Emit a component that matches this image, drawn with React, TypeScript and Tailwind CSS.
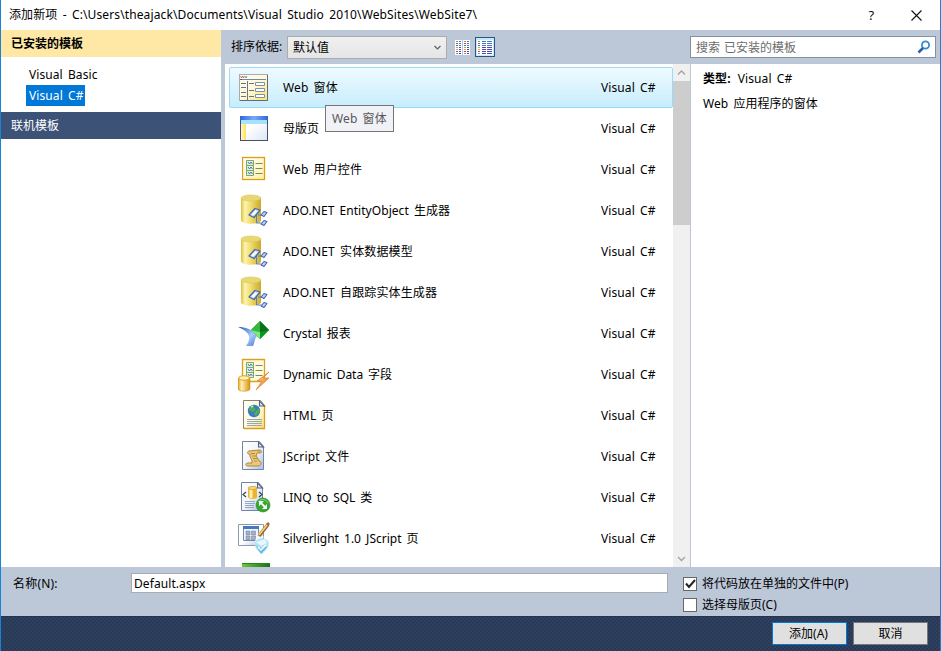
import React from "react";

const FONT = "font-['Noto_Sans','Noto_Sans_CJK_SC',sans-serif]";

function WebFormIcon() {
  return (
    <svg width="32" height="32" viewBox="0 0 32 32">
      <defs>
        <linearGradient id="wf" x1="0" y1="0" x2="1" y2="1">
          <stop offset="0" stopColor="#fffef0" />
          <stop offset="0.5" stopColor="#fff9d8" />
          <stop offset="1" stopColor="#fbe36c" />
        </linearGradient>
      </defs>
      <rect x="1.5" y="2.500" width="28" height="26" fill="url(#wf)" stroke="#a9abb0" />
      <path d="M29.500 3v25.500H2" fill="none" stroke="#606a80" />
      <path d="M2.500 4l1 2 1-2 1 2 1-2M7 4l1 2 1-2" fill="none" stroke="#4c5770" strokeWidth=".6" />
      <path d="M3 7.500h25" stroke="#7087aa" />
      <path d="M2 7.500h2" stroke="#e32914" />
      <path d="M9.500 9v19" stroke="#68748b" />
      <path d="M3 11.500h5M3 15.500h5M3 20.500h5M3 24.500h5M11 11.500h5M11 18.500h5M11 24.500h5" stroke="#68748b" />
      <path d="M17.500 10.500h9v3h-9zM17.500 16.500h9v3h-9zM17.500 22.500h9v3h-9z" fill="#fff" stroke="#7c92ac" />
    </svg>
  );
}

function MasterPageIcon() {
  return (
    <svg width="32" height="32" viewBox="0 0 32 32">
      <defs>
        <linearGradient id="mp" x1="0" y1="0" x2="1" y2="0">
          <stop offset="0" stopColor="#2869df" />
          <stop offset="0.5" stopColor="#7da8f6" />
          <stop offset="1" stopColor="#2d67d8" />
        </linearGradient>
        <linearGradient id="mpw" x1="0" y1="0" x2="1" y2="1">
          <stop offset="0.4" stopColor="#fff" />
          <stop offset="1" stopColor="#dce5f6" />
        </linearGradient>
        <linearGradient id="mpy" x1="0" y1="0" x2="1" y2="0">
          <stop offset="0" stopColor="#fff8cf" />
          <stop offset="1" stopColor="#ffe152" />
        </linearGradient>
      </defs>
      <rect x="2.500" y="3.500" width="27" height="24" fill="url(#mpw)" stroke="#44516e" />
      <path d="M2 3h28v4H2z" fill="url(#mp)" />
      <path d="M3 7h26v4H3z" fill="#a5e2fc" />
      <path d="M3 11h5v16H3z" fill="url(#mpy)" />
    </svg>
  );
}

function FormRows() {
  return (
    <>
      <path d="M6.500 6.500h7v5h-7zM6.500 11.500h7v5h-7zM6.500 16.500h7v5h-7z" fill="#e3efdc" stroke="#77ab6b" />
      <path d="M8 8l1.500 2L11 8l1.500 2M8 13l1.500 2 1.500-2 1.500 2M8 18l1.500 2 1.500-2 1.500 2" fill="none" stroke="#4769a4" strokeWidth=".9" />
      <path d="M15.500 9.500h7M15.500 14.500h7M15.500 19.500h7" stroke="#798a68" />
    </>
  );
}

function UserControlIcon() {
  return (
    <svg width="32" height="32" viewBox="0 0 32 32">
      <defs>
        <linearGradient id="uc" x1="0" y1="0" x2="1" y2="1">
          <stop offset="0" stopColor="#fff" />
          <stop offset="1" stopColor="#fff2a8" />
        </linearGradient>
      </defs>
      <rect x=".500" y="3.500" width="22" height="22" fill="url(#uc)" stroke="#dd9e16" strokeWidth="1.300" />
      <g transform="translate(-2 0)"><FormRows /></g>
    </svg>
  );
}

function DatabaseIcon() {
  return (
    <svg width="32" height="34" viewBox="0 0 32 34">
      <defs>
        <linearGradient id="db" x1="0" y1="0" x2="1" y2="0">
          <stop offset="0" stopColor="#dcc23c" />
          <stop offset="0.2" stopColor="#fdf4ae" />
          <stop offset="0.5" stopColor="#efdc6c" />
          <stop offset="1" stopColor="#c9a92f" />
        </linearGradient>
      </defs>
      <path d="M3 4v22c0 5 20 5 20 0V4z" fill="url(#db)" />
      <ellipse cx="13" cy="4" rx="10" ry="3" fill="#e8d873" stroke="#dcc65a" strokeWidth=".6" />
      <path d="M18.500 21v8h5M20 21h6" fill="none" stroke="#5c7fc0" />
      <path d="M11 21l6-6.500 5 1.500-6 7.500z" fill="#c9dcfa" stroke="#4867aa" strokeWidth="1.300" strokeLinejoin="round" />
      <path d="M13.500 20.500l4-4 2 .7-4 4z" fill="#fff" />
      <g fill="#b9d1fa" stroke="#4867aa" strokeWidth="1.100" strokeLinejoin="round">
        <path d="M23 21l3-3.500 3 1-3 4zM23 30l3-3.500 3 1-3 4z" />
      </g>
    </svg>
  );
}

function CrystalIcon() {
  return (
    <svg width="34" height="32" viewBox="0 0 34 32">
      <defs>
        <linearGradient id="cr" x1="0" y1="0" x2="1" y2="1">
          <stop offset="0" stopColor="#245ba9" />
          <stop offset="0.55" stopColor="#a8ccff" />
          <stop offset="1" stopColor="#4378ce" />
        </linearGradient>
      </defs>
      <path d="M0 9c8 0 13 2 17 7l3 1c-4 3-3 8-5 11H8c6-8 4-14-8-19z" fill="url(#cr)" />
      <path d="M22 3l9 9-9 9-9-9z" fill="#0b8b1c" />
      <path d="M22 3l-9 9 9 2z" fill="#34b73c" />
      <path d="M13 12l9 2v7z" fill="#7fe57f" />
      <path d="M22 14l9-2-9 9z" fill="#07991a" />
      <path d="M22 3l9 9-9 2z" fill="#08711a" />
    </svg>
  );
}

function DynamicDataIcon() {
  return (
    <svg width="34" height="34" viewBox="0 0 34 34">
      <defs>
        <linearGradient id="dd" x1="0" y1="0" x2="1" y2="0">
          <stop offset="0" stopColor="#e6a01b" />
          <stop offset="0.3" stopColor="#fff1b0" />
          <stop offset="1" stopColor="#d89113" />
        </linearGradient>
        <linearGradient id="bolt" x1="0" y1="0" x2="1" y2="1">
          <stop offset="0" stopColor="#ffe59a" />
          <stop offset="1" stopColor="#ee6a12" />
        </linearGradient>
      </defs>
      <path d="M4.500 1.500h22v22h-22z" fill="#fffbdc" stroke="#dca020" strokeWidth="1.300" />
      <g transform="translate(2 -2)"><FormRows /></g>
      <path d="M0 20v11c0 3 12 3 12 0V20z" fill="url(#dd)" stroke="#c18a16" strokeWidth=".5" />
      <ellipse cx="6" cy="20" rx="5.500" ry="2.200" fill="#fff2bc" stroke="#e1a127" />
      <path d="M31 14L19 23h5l-6 9 13-12h-6l6-6z" fill="url(#bolt)" stroke="#d98a3c" strokeWidth=".8" />
    </svg>
  );
}

function Page({ yellow = false, children }: { yellow?: boolean; children: React.ReactNode }) {
  return (
    <svg width="34" height="33" viewBox="0 0 34 33">
      <defs>
        <linearGradient id={yellow ? "py" : "pb"} x1="0" y1="0" x2="1" y2="1">
          <stop offset="0" stopColor="#fff" />
          <stop offset="0.5" stopColor={yellow ? "#fffbe2" : "#f1f6fd"} />
          <stop offset="1" stopColor={yellow ? "#f8e371" : "#a9bfe3"} />
        </linearGradient>
      </defs>
      <path d="M1.500 1.500h17l4 5v23h-21z" fill={yellow ? "url(#py)" : "url(#pb)"} stroke={yellow ? "#8d8366" : "#7484a0"} />
      {yellow && <path d="M22.500 7v22.500H2" fill="none" stroke="#d99b20" strokeWidth="1.300" />}
      <path d="M17.500 2v5h5z" fill="#e6edf9" stroke="#52617f" strokeWidth="1.100" />
      {children}
    </svg>
  );
}

function HtmlIcon() {
  return (
    <Page yellow>
      <circle cx="12" cy="12" r="6.200" fill="#397cc4" />
      <path d="M8 8c3-3 5-1 4 1l2 1-3 3-4-2zM13 13l4-4 1 3-4 5-2-2z" fill="#54af47" />
      <path d="M9 8l2-1" stroke="#afe8fb" strokeWidth="1.500" />
      <path d="M5 20.500h15M5 22.500h15M5 24.500h15M5 26.500h15" stroke="#8c9cb5" strokeWidth=".9" />
    </Page>
  );
}

function JScriptIcon() {
  return (
    <Page>
      <path d="M8 11c-3 1-1 4 1 3-1 4 3 5 2 9H7c-3 0-3 3 0 3h10c4 0 4-5 1-5-1-3-4-5-2-8h2c4 0 3-3 0-3z" fill="#e8c97a" stroke="#b58536" />
      <path d="M10 13.500h4M11 16h4M12 18.500h4M13 21h3" stroke="#b58a3c" />
      <path d="M16 11h2c2 0 1 2-1 1" fill="#fff0ae" stroke="#b58536" strokeWidth=".8" />
    </Page>
  );
}

function LinqIcon() {
  return (
    <Page>
      <path d="M8 7v9c0 2.500 9 2.500 9 0V7z" fill="#edb52f" />
      <path d="M9.500 8v9h3V8z" fill="#fff0b3" />
      <ellipse cx="12.500" cy="7" rx="4.500" ry="1.600" fill="#f6d677" stroke="#d3962a" strokeWidth=".7" />
      <path d="M6 11l-3 2.500 3 2.500M19 11l3 2.500-3 2.500" fill="none" stroke="#3a3d43" strokeWidth="1.200" />
      <path d="M5 20.500h10M5 22.500h10M5 24.500h9M5 26.500h9" stroke="#8d9db9" strokeWidth=".9" />
      <circle cx="23" cy="24" r="7" fill="#36a630" stroke="#238722" strokeWidth=".6" />
      <path d="M18 21c3-4 8-3 10 1" fill="none" stroke="#8cdb76" />
      <path d="M19 20h5l-5 5zM27 28h-5l5-5z" fill="#fff" />
      <path d="M21 22l4 4" stroke="#fff" strokeWidth="1.800" />
    </Page>
  );
}

function SilverlightIcon() {
  return (
    <svg width="34" height="34" viewBox="0 0 34 34">
      <defs>
        <linearGradient id="sl" x1="0" y1="0" x2="1" y2="1">
          <stop offset=".5" stopColor="#fff" />
          <stop offset="1" stopColor="#b4c3dc" />
        </linearGradient>
      </defs>
      <path d="M.500 2.500h25v21h-25z" fill="url(#sl)" stroke="#8e9ab0" />
      <path d="M5.500 4.500h15v14h-15z" fill="#eff5ff" stroke="#7189b3" />
      <path d="M5 4h16v3H5z" fill="#4978c2" />
      <path d="M8 9h4v4H8zM13.500 9h4v4h-4zM8 14h4v4H8zM13.500 14h4v4h-4z" fill="#a3b0c6" stroke="#6c7c98" strokeWidth=".5" />
      <path d="M20 11l-4 11 10-7z" fill="#f6f9ff" />
      <path d="M30 2.500L21 14" stroke="#8b6731" strokeWidth="3.600" />
      <path d="M29.500 2.500L21 13" stroke="#f5d36d" strokeWidth="1.800" />
      <path d="M28 2l2-2 2 2-2 2z" fill="#be5e4d" />
      <path d="M17 20c2-4 9-5 12-2 4 3 1 9-5 14-5-3-8-7-7-12z" fill="#aee0f5" fillOpacity=".9" />
      <path d="M18 20l9-3 2 4-6 3z" fill="#e4f8ff" />
      <path d="M18 24l6 2 6-2-7 8z" fill="#66b8df" />
      <path d="M20 25l3 3 5-5" fill="none" stroke="#f5ffff" strokeWidth="1.500" />
    </svg>
  );
}

const items = [
  { name: "Web 窗体", icon: <WebFormIcon />, track: "tracking-[0.1px]" },
  { name: "母版页", icon: <MasterPageIcon /> },
  { name: "Web 用户控件", icon: <UserControlIcon />, pad: "pl-[4px]", track: "tracking-[0.1px]" },
  { name: "ADO.NET EntityObject 生成器", icon: <DatabaseIcon />, track: "tracking-[0.05px]" },
  { name: "ADO.NET 实体数据模型", icon: <DatabaseIcon />, track: "tracking-[0.12px]" },
  { name: "ADO.NET 自跟踪实体生成器", icon: <DatabaseIcon />, track: "tracking-[0.12px]" },
  { name: "Crystal 报表", icon: <CrystalIcon /> },
  { name: "Dynamic Data 字段", icon: <DynamicDataIcon />, track: "tracking-[-0.06px]" },
  { name: "HTML 页", icon: <HtmlIcon />, pad: "pl-[4px]", track: "tracking-[0.15px]" },
  { name: "JScript 文件", icon: <JScriptIcon />, pad: "pl-[3px]", track: "tracking-[0.2px]" },
  { name: "LINQ to SQL 类", icon: <LinqIcon />, pad: "pl-[2px]", track: "tracking-[-0.06px]" },
  { name: "Silverlight 1.0 JScript 页", icon: <SilverlightIcon /> },
];

const dots = ["#72a85a", "#e55034", "#4c66c4", "#8fbf5a", "#e8a336", "#d33f34", "#6a9bd8"];

function ListGlyph({ wide = false }: { wide?: boolean }) {
  return (
    <svg width="16" height="15" viewBox="0 0 16 15" shapeRendering="crispEdges">
      <path d={wide ? "M0 0h16v15H0z" : "M0 0h7v15H0zM8 0h7v15H8z"} fill="#fff" />
      {dots.map((color, i) => (
        <g key={i}>
          <path d={wide ? `M1 ${i * 2 + 1.5}h2` : `M1 ${i * 2 + 1.5}h2M9 ${i * 2 + 1.5}h2`} stroke={color} />
          <path
            d={wide ? `M5 ${i * 2 + 1.5}h4M10 ${i * 2 + 1.5}h5` : `M4 ${i * 2 + 1.5}h2M12 ${i * 2 + 1.5}h2`}
            stroke={i < 3 ? "#4a78cc" : "#4b48b4"}
          />
        </g>
      ))}
    </svg>
  );
}

function Chevron({ up = false }: { up?: boolean }) {
  return (
    <svg width="9" height="6" viewBox="0 0 9 6">
      <path d={up ? "M1 4.500l3.500-3.500 3.500 3.500" : "M1 1l3.500 3.500 3.500-3.500"} fill="none" stroke="#a2a2a2" strokeWidth="1.300" />
    </svg>
  );
}

export default function App() {
  return (
    <div className={`${FONT} flex h-[651px] w-[941px] flex-col overflow-hidden border-x border-[#1883d7] bg-[#bcc7d8] text-[12px] leading-[16px] text-black [word-spacing:2px]`}>
      <header className="flex h-[30px] shrink-0 items-center bg-white pl-2">
        <span className="flex-1 tracking-[0.12px] whitespace-nowrap">添加新项 - C:\Users\theajack\Documents\Visual Studio 2010\WebSites\WebSite7\</span>
        <span className="mr-[37px] font-['Open_Sans'] text-[13px] font-medium">?</span>
        <svg className="mr-[18px]" width="11" height="11" viewBox="0 0 11 11"><path d="M.500.500l10 10M10.500.500l-10 10" stroke="#111" strokeWidth="1.100" /></svg>
      </header>

      <main className="flex h-[537px] shrink-0">
        <aside className="mr-1 flex w-[220px] shrink-0 flex-col bg-white">
          <div className="flex h-[27px] items-center bg-[#ffe8a6] pt-px pl-[10px] font-bold">已安装的模板</div>
          <div className="flex h-[55px] flex-col items-start pt-[7px] pl-[25px]">
            <div className="flex h-[21px] items-center px-[3px] tracking-[0.08px]">Visual Basic</div>
            <div className="flex h-[21px] w-[59px] items-center bg-[#0078d7] pl-[3px] tracking-[0.1px] whitespace-nowrap text-white">Visual C#</div>
          </div>
          <div className="flex h-[27px] items-center bg-[#3d5277] pt-px pl-[10px] text-white">联机模板</div>
        </aside>

        <div className="flex min-w-0 flex-1 flex-col">
          <div className="flex h-[34px] shrink-0 items-center pr-[4px] pl-[6px]">
            <span className="w-[56px] whitespace-nowrap">排序依据:</span>
            <div className="flex h-[23px] w-[160px] items-center justify-between border border-[#acacac] bg-linear-to-b from-[#f0f0f0] to-[#e5e5e5] pt-px pr-[4px] pl-[5px]">
              默认值
              <svg width="9" height="6" viewBox="0 0 9 6"><path d="M1.500 1l3 3 3-3" fill="none" stroke="#606060" strokeWidth="1.200" /></svg>
            </div>
            <div className="flex h-5 w-[28px] items-center justify-center pl-[4px]"><ListGlyph /></div>
            <div className="flex h-5 w-5 items-center justify-center border border-[#235884] bg-[#c8e8fa]"><ListGlyph wide /></div>
            <div className="ml-auto flex h-[22px] w-[246px] items-center justify-between border border-[#8591a2] bg-white pr-[4px] pl-[5px] text-[#6d6d6d]">
              <span className="pt-[2px] [word-spacing:1px]">搜索 已安装的模板</span>
              <svg width="14" height="14" viewBox="0 0 14 14" fill="none">
                <circle cx="8.500" cy="5" r="3.600" stroke="#368dd2" strokeWidth="1.800" />
                <path d="M6 8l-4.500 4.500" stroke="#285cae" strokeWidth="2.500" />
              </svg>
            </div>
          </div>

          <div className="flex min-h-0 flex-1 bg-white">
            <div className="h-[503px] w-[448px] shrink-0 overflow-hidden pt-[3px] pl-[4px]">
              {items.map((item, i) => (
                <div
                  key={item.name}
                  className={`relative flex h-[41px] w-[444px] items-center rounded-[2px] border pr-[17px] pl-[8px] ${i === 0 ? "border-[#98dcfb] bg-linear-to-b from-[#effaff] to-[#c7edfc]" : "border-transparent"}`}
                >
                  <div className={`flex w-[45px] shrink-0 ${item.pad ?? ""}`}>{item.icon}</div>
                  <span className={`flex-1 whitespace-nowrap ${item.track ?? ""}`}>{item.name}</span>
                  <span className="w-[54px] tracking-[0.1px] whitespace-nowrap">Visual C#</span>
                  {i === 0 && (
                    <div className="absolute top-[37px] left-[95px] z-10 flex h-[27px] w-[69px] items-center border border-[#767676] bg-[#f1f2f7] pl-[6px] tracking-[0.1px] whitespace-nowrap text-[#575757]">Web 窗体</div>
                  )}
                </div>
              ))}
              <div className="mt-1 ml-[13px] h-1 w-[28px] border-t border-[#278522] bg-linear-to-r from-[#67cb37] to-[#167119]" />
            </div>
            <div className="flex w-[17px] shrink-0 flex-col items-center bg-[#f0f0f0]">
              <div className="flex h-[17px] items-center"><Chevron up /></div>
              <div className="h-[144px] w-full bg-[#cdcdcd]" />
              <div className="mt-auto flex h-[17px] items-center"><Chevron /></div>
            </div>
            <section className="flex-1 border-l border-[#bcc7d8] pt-[7px] pl-3">
              <div className="flex h-[16px] items-center tracking-[0.1px]"><b className="mr-[7px]">类型:</b>Visual C#</div>
              <div className="mt-[9px] tracking-[0.05px]">Web 应用程序的窗体</div>
            </section>
          </div>
        </div>
      </main>

      <section className="flex h-[49px] shrink-0 pt-[6px] pl-3">
        <label className="w-[118px] pt-[3px] tracking-[0.2px]">名称(N):</label>
        <div className="flex h-[20px] w-[537px] items-center border border-[#ababb3] bg-white pt-[2px] pl-[2px] tracking-[0.08px]">Default.aspx</div>
        <div className="ml-[15px] flex flex-col">
          <label className="flex h-[21px] items-center gap-[5px]">
            <span className="flex h-[14px] w-[14px] items-center justify-center border border-[#686868] bg-white">
              <svg width="11" height="10" viewBox="0 0 11 10"><path d="M1 4.500l3 3.500 6-7" fill="none" stroke="#222" strokeWidth="2" /></svg>
            </span>
            将代码放在单独的文件中(P)
          </label>
          <label className="flex h-[21px] items-center gap-[5px]">
            <span className="h-[14px] w-[14px] border border-[#686868] bg-white" />
            选择母版页(C)
          </label>
        </div>
      </section>

      <footer className="flex h-[35px] shrink-0 gap-[6px] border-t border-[#233650] bg-[#293955] bg-[radial-gradient(circle,#35496a_0.6px,transparent_0.8px),radial-gradient(circle,#35496a_0.6px,transparent_0.8px)] bg-size-[4px_4px] bg-position-[0_0,2px_2px] pt-[5px] pl-[771px]">
        <button className="h-[23px] w-[75px] border border-[#0078d7] bg-[#e0e0e0] pr-[2px]">添加(A)</button>
        <button className="h-[23px] w-[75px] border border-[#777] bg-[#e0e0e0]">取消</button>
      </footer>
    </div>
  );
}
